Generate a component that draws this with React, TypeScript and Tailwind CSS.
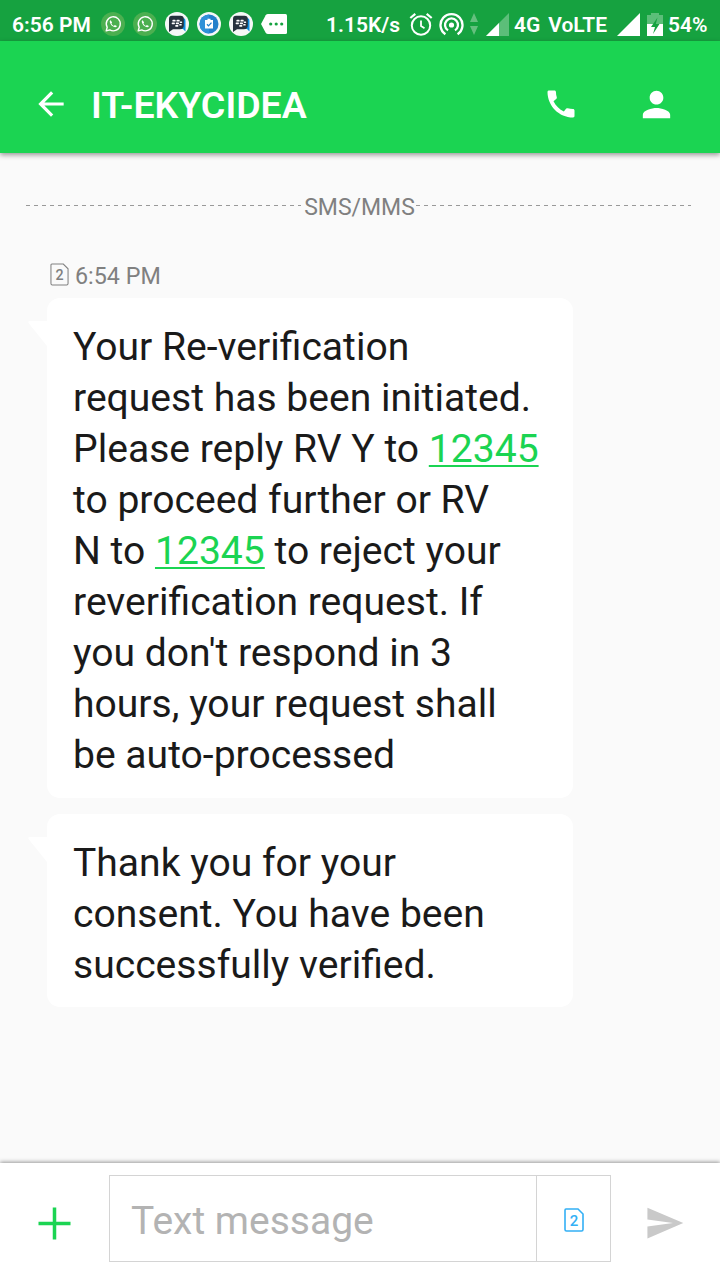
import React from 'react';
import { MdCall, MdPerson, MdSend, MdArrowBack } from 'react-icons/md';

const WhatsAppBadge = () => (
  <svg className="w-6 h-6 shrink-0" viewBox="0 0 24 24">
    <circle cx="12" cy="12" r="12" fill="#4caf50" />
    <path d="M5.2 18.9l1-3.6a7 7 0 1 1 2.6 2.6z" fill="none" stroke="#fff" strokeWidth="1.4" strokeLinejoin="round" />
    <path
      d="M9.7 8.2c-.7.2-1.1 1-.9 1.9.5 2.6 2.6 4.7 5.3 5.1.8.1 1.6-.4 1.7-1.2l-2-1-.9.9c-1.2-.5-2-1.3-2.5-2.4l.7-1z"
      fill="#fff"
    />
  </svg>
);

const BbmBadge = () => (
  <svg className="w-6 h-6 shrink-0" viewBox="0 0 24 24">
    <circle cx="12" cy="12" r="12" fill="#f5f8f7" />
    <path d="M15 6h2.500q3 0 3 3v10.500l-2.500-2.500H12z" fill="#0d8ee0" />
    <path d="M7 3.800h8.500q3.300 0 3.300 3.300v6.200q0 4-4 4H8L4 20V7q0-3.200 3-3.200z" fill="#26323e" />
    <g fill="#fff">
      <rect x="7.400" y="7.800" width="3.200" height="1.700" rx=".6" />
      <rect x="11.500" y="7.800" width="3.200" height="1.700" rx=".6" />
      <rect x="6.700" y="10.500" width="3.200" height="1.700" rx=".6" />
      <rect x="10.800" y="10.500" width="3.200" height="1.700" rx=".6" />
      <rect x="14.700" y="9.400" width="2.500" height="1.500" rx=".6" />
      <rect x="10.200" y="13.100" width="3.200" height="1.600" rx=".6" />
      <rect x="14.200" y="12" width="2.500" height="1.500" rx=".6" />
    </g>
  </svg>
);

const TaskBadge = () => (
  <svg className="w-6 h-6 shrink-0" viewBox="0 0 24 24">
    <circle cx="12" cy="12" r="12" fill="#f5f8f7" />
    <circle cx="12" cy="12" r="9.500" fill="#2380cb" />
    <path d="M12 2.500a9.500 9.500 0 0 0 0 19z" fill="#2f91d8" />
    <path d="M8 8h2.500V6.800h3V8H16v8.500H8z" fill="#fff" />
    <path d="M10 12.300l1.500 1.600 3-3.300" fill="none" stroke="#2380cb" strokeWidth="1.300" />
  </svg>
);

const MoreTag = () => (
  <svg className="ml-2 w-[27px] h-5 shrink-0" viewBox="0 0 27 20">
    <path d="M7 0h17.500q1.500 0 1.500 1.500v17q0 1.500-1.500 1.500H7q-1.500 0-2.300-1.300L0 10l4.700-8.700Q5.500 0 7 0z" fill="#fff" />
    <g fill="#16a240">
      <circle cx="9.700" cy="10" r="1.600" />
      <circle cx="15.200" cy="10" r="1.600" />
      <circle cx="20.700" cy="10" r="1.600" />
    </g>
  </svg>
);

const StatusBar = () => (
  <div className="flex items-center h-[41px] pt-[7px] pl-3 bg-[#16a240] text-white text-[21px] font-semibold whitespace-nowrap">
    <span className="w-[89px] shrink-0 pt-[3px]">6:56 PM</span>
    <div className="flex gap-2 shrink-0">
      <WhatsAppBadge />
      <WhatsAppBadge />
      <BbmBadge />
      <TaskBadge />
      <BbmBadge />
    </div>
    <MoreTag />
    <span className="ml-[38px] w-[83px] shrink-0 pt-[3px]">1.15K/s</span>

    {/* Alarm */}
    <svg className="w-6 h-6 shrink-0" viewBox="0 0 24 24" fill="none" stroke="#fff">
      <circle cx="12" cy="13.500" r="9.200" strokeWidth="2" />
      <path d="M12 8.500v5.500l3.500 2.200" strokeWidth="1.800" />
      <path d="M1.300 6l5-4.200M22.700 6l-5-4.200" strokeWidth="2.200" />
    </svg>

    {/* Hotspot */}
    <svg className="ml-[5px] w-[26px] h-6 shrink-0" viewBox="0 0 26 24" fill="none" stroke="#fff" strokeWidth="2.300">
      <circle cx="13.500" cy="13" r="2.600" fill="#fff" stroke="none" />
      <path d="M7.400 22.200a11 11 0 1 1 12.200 0" />
      <path d="M10 18.400a6.500 6.500 0 1 1 7 0" />
    </svg>
    <svg className="ml-1.5 w-2 h-6 shrink-0" viewBox="0 0 8 24" fill="#65bf7e">
      <path d="M4 1l4 9H0zM4 23l4-9H0z" />
    </svg>

    <svg className="ml-2 w-[23px] h-[23px] shrink-0" viewBox="0 0 23 23">
      <path d="M0 23L23 0v23z" fill="#5cbe79" />
      <path d="M0 23L13 10v13z" fill="#fff" />
    </svg>
    <span className="ml-[5px] w-[103px] shrink-0 pt-[3px]">
      4G<span className="ml-2">VoLTE</span>
    </span>
    <svg className="w-[23px] h-[23px] shrink-0" viewBox="0 0 23 23">
      <path d="M0 23L23 0v23z" fill="#fff" />
    </svg>
    <svg className="ml-[7px] w-4 h-[23px] shrink-0" viewBox="0 0 16 23">
      <path d="M0 2h4V0h8v2h4v9H0z" fill="#5cbe79" />
      <path d="M0 11h16v12H0z" fill="#fff" />
      <path d="M10.500 4.500L4 14h4l-2 7 6.500-10H8.800z" fill="#16a240" />
    </svg>
    <span className="ml-[5px] pt-[3px]">54%</span>
  </div>
);

const Header = () => (
  <header className="relative z-10 flex items-center h-28 bg-[#1bd452] text-white shadow-[0_2px_5px_rgba(0,0,0,0.4)]">
    <div className="flex items-center h-full w-[91px] pl-8 pt-[13px]">
      <MdArrowBack className="w-[38px] h-[38px]" />
    </div>
    <h1 className="flex-1 pt-[17px] text-[37.500px] leading-none font-semibold">IT-EKYCIDEA</h1>
    <MdCall className="w-9 h-9 mt-3.5 mr-[57px]" />
    <MdPerson className="w-[41px] h-[41px] mt-3.5 mr-[43px]" />
  </header>
);

const SimIcon = ({ className, strokeWidth }: { className: string; strokeWidth: number }) => (
  <svg className={className} viewBox="0 0 20 24">
    <path
      d="M2 1h12l5 5v15.500q0 1.500-1.500 1.500h-15Q1 23 1 21.500V2.200Q1 1 2 1z"
      fill="none"
      stroke="currentColor"
      strokeWidth={strokeWidth}
    />
    <text x="10" y="17.500" textAnchor="middle" fontSize="15" fontWeight="500" fill="currentColor">
      2
    </text>
  </svg>
);

const PhoneLink = () => <a className="text-[#1bd452] underline decoration-2 underline-offset-[3px]">12345</a>;

const Bubble = ({ lines, className }: { lines: React.ReactNode[]; className: string }) => (
  <div className={`relative ml-[47px] w-[526px] px-[26px] rounded-[13px] bg-white text-[#1a1a1a] ${className}`}>
    <svg className="absolute -left-[19px] top-[23px] w-[19px] h-[25px]" viewBox="0 0 19 25">
      <path d="M1 0h18v25L.5 2Q0 0 1 0z" fill="#fff" />
    </svg>
    {lines.map((line, i) => (
      <div key={i} className="h-[51px] leading-[51px] text-[39.100px] whitespace-nowrap">
        {line}
      </div>
    ))}
  </div>
);

const firstMessage = [
  'Your Re-verification',
  'request has been initiated.',
  <>Please reply RV Y to <PhoneLink /></>,
  'to proceed further or RV',
  <>N to <PhoneLink /> to reject your</>,
  'reverification request. If',
  "you don't respond in 3",
  'hours, your request shall',
  'be auto-processed',
];

const secondMessage = ['Thank you for your', 'consent. You have been', 'successfully verified.'];

const DashedLine = () => (
  <div className="flex-1 h-px bg-[repeating-linear-gradient(90deg,#999_0px,#999_4px,transparent_4px,transparent_8px)]" />
);

const Composer = () => (
  <footer className="relative flex items-center h-[117px] bg-white shadow-[0_-1px_4px_rgba(0,0,0,0.4)]">
    <div className="w-[109px] pl-[38px] pt-[3px]">
      <svg className="w-[33px] h-[33px]" viewBox="0 0 33 33" stroke="#1bd452" strokeWidth="3.500">
        <path d="M16.500 .5v32M.5 16.500h32" />
      </svg>
    </div>
    <div className="flex w-[502px] h-[87px] -mt-[6px] border border-[#d4d4d4]">
      <div className="flex items-center flex-1 pl-[21px] pt-[5px] text-[39px] text-[#b3b3b3]">Text message</div>
      <div className="flex items-center justify-center w-[74px] pt-[3px] border-l border-[#d4d4d4] text-[#33b0f5]">
        <SimIcon className="w-[20px] h-6" strokeWidth={1.6} />
      </div>
    </div>
    <MdSend className="w-[41px] h-[42px] ml-[33px] mt-[3px] text-[#c9c9c9]" />
  </footer>
);

const App = () => {
  return (
    <div className="flex flex-col w-[720px] h-[1280px] overflow-hidden bg-[#fafafa] font-[Roboto,sans-serif]">
      <StatusBar />
      <Header />
      <main className="flex-1">
        <div className="flex items-center h-[30px] mt-[37px] pl-[26px] pr-[29px]">
          <DashedLine />
          <span className="pl-[3px] pr-px pt-[5px] text-[23px] leading-none text-[#808080]">SMS/MMS</span>
          <DashedLine />
        </div>
        <div className="flex items-center h-[28px] mt-[41px] ml-[50px] text-[#808080]">
          <SimIcon className="w-[19px] h-[23px] -mt-px" strokeWidth={1.1} />
          <span className="ml-[6px] pt-1 text-[23.300px] leading-none">6:54 PM</span>
        </div>
        <Bubble className="mt-[9px] h-[500px] pt-6" lines={firstMessage} />
        <Bubble className="mt-4 h-[193px] pt-6" lines={secondMessage} />
      </main>
      <Composer />
    </div>
  );
};

export default App;
